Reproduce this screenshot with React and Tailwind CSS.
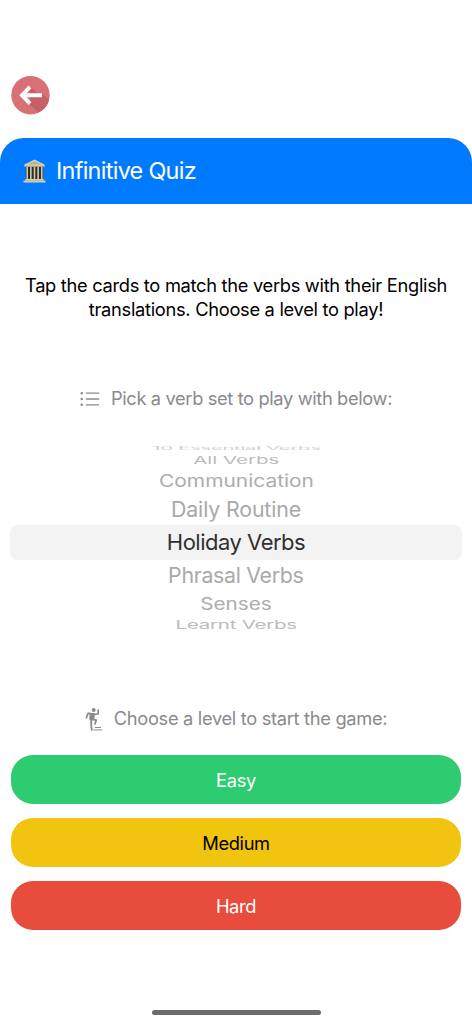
import React, { useState } from "react";

// Each row of the wheel is squashed a bit more the further it is from the middle
const verbSets = [
  { name: "10 Essential Verbs", row: "h-[9px] text-[#d0d0d0]", text: "tracking-[-0.3px] scale-x-[0.92] scale-y-[0.19]" },
  { name: "All Verbs", row: "h-[16px] pb-[1px] text-[#bcbcbc]", text: "scale-x-[0.93] scale-y-[0.5]" },
  { name: "Communication", row: "h-[26px] text-[#acacac]", text: "scale-x-[0.95] scale-y-[0.76]" },
  { name: "Daily Routine", row: "h-[31px] pb-[2px] text-[#a9a9a9]", text: "tracking-[-0.15px] scale-x-[0.97] scale-y-[0.96]" },
  { name: "Holiday Verbs", row: "h-[35px] pb-[2px] text-[#303030]", text: "tracking-[-0.5px]" },
  { name: "Phrasal Verbs", row: "h-[31px] pb-[2px] text-[#a9a9a9]", text: "tracking-[-0.33px] scale-x-[0.97] scale-y-[0.96]" },
  { name: "Senses", row: "h-[26px] text-[#acacac]", text: "scale-x-[0.94] scale-y-[0.76]" },
  { name: "Learnt Verbs", row: "h-[16px] text-[#bcbcbc]", text: "tracking-[-0.25px] scale-x-[0.93] scale-y-[0.53]" },
];

const levels = [
  { name: "Easy", color: "bg-[#2ecc71] text-white" },
  { name: "Medium", color: "bg-[#f1c40f] text-black" },
  { name: "Hard", color: "bg-[#e74c3c] text-white" },
];

const BackIcon = () => (
  <svg width="39" height="39" viewBox="0 0 39 39">
    <circle cx="19.5" cy="19.2" r="19.2" fill="#d87078" />
    <path d="M19 10 27 18H31L38 24A19.2 19.2 0 0 1 27.5 36.6L19 28.5Z" fill="#c75f67" />
    <path d="M19 10.8 11 19.2 19 27.6M11 19.2H31" fill="none" stroke="#fff" strokeWidth="3.9" />
  </svg>
);

const MuseumIcon = () => (
  <svg width="23" height="24" viewBox="0 0 24 24" preserveAspectRatio="none">
    <path d="M3 8H21V21H3Z" fill="#302d22" />
    <path d="M12 .5 22.5 5.5V8H1.5V5.5Z" fill="#d6cfb4" />
    <path d="M12 2.2 19.5 5.6H4.5Z" fill="#b9b192" />
    <path d="M1.5 7.4H22.5" stroke="#8c8569" strokeWidth=".7" />
    <path d="M4.4 8V20.5M8.2 8V20.5M12 8V20.5M15.8 8V20.5M19.6 8V20.5" stroke="#cdc6aa" strokeWidth="1.7" />
    <path d="M2.5 20H21.5V21.5H23.5V23.5H.5V21.5H2.5Z" fill="#d6cfb4" />
    <path d="M1 21.7H23" stroke="#a69e7d" strokeWidth=".5" />
  </svg>
);

const ListIcon = () => (
  <svg width="20" height="16" viewBox="0 0 20 16" fill="none" stroke="#8a8a8e" strokeLinecap="round">
    <path d="M6.3 2.2H18.7M6.3 8H18.7M6.3 13.8H18.7" strokeWidth="1.3" />
    <path d="M1.7 2.2H1.8M1.7 8H1.8M1.7 13.8H1.8" strokeWidth="2.4" />
  </svg>
);

const RunnerIcon = () => (
  <svg width="18" height="24" viewBox="0 0 18 24" fill="none" stroke="#8a8a8e" strokeLinecap="round" strokeLinejoin="round">
    <circle cx="8.7" cy="2.9" r="2" fill="#8a8a8e" stroke="none" />
    <path d="M5.2 6.6H9.2L8.6 12.6H5Z" fill="#8a8a8e" strokeWidth="1.4" />
    <path d="M5 6.4H3L1.4 10.8M9 7.3 13.2 7V3" strokeWidth="1.7" />
    <path d="M7.6 12.4 11.2 13.2 10 16.8M6.2 12.8V17.5L6.7 22.8" strokeWidth="1.8" />
    <path d="M10.3 20.5H15.6M8.7 22.9H16.7" strokeWidth="1" />
  </svg>
);

const App = () => {
  const [selected, setSelected] = useState("Holiday Verbs");

  return (
    <div className="flex h-[1024px] w-[472px] flex-col overflow-hidden bg-white font-['Inter',sans-serif]">
      <div className="h-[138px] pt-[76px] pl-[11px]">
        <button className="block" aria-label="Back">
          <BackIcon />
        </button>
      </div>

      <header className="flex h-[66px] shrink-0 items-center rounded-t-[24px] bg-[#007aff] pl-[23px]">
        <MuseumIcon />
        <h1 className="ml-[10px] text-[23.4px] tracking-[-0.7px] whitespace-nowrap text-white">Infinitive Quiz</h1>
      </header>

      <p className="mt-[69px] text-center text-[18.3px] leading-[24px] tracking-[-0.3px] whitespace-nowrap text-black">
        Tap the cards to match the verbs with their English
        <br />
        translations. Choose a level to play!
      </p>

      <div className="mt-[66px] flex h-[24px] items-center justify-center gap-[11px] text-[18.3px] tracking-[-0.37px] whitespace-nowrap text-[#8a8a8e]">
        <ListIcon />
        <span>Pick a verb set to play with below:</span>
      </div>

      {/* Verb set wheel */}
      <div className="mt-[32px] flex flex-col px-[10px] text-[22px] leading-[26px]">
        {verbSets.map((set) => (
          <button
            key={set.name}
            onClick={() => setSelected(set.name)}
            className={`flex items-center justify-center rounded-[8px] ${set.row} ${set.name === selected ? "bg-[#f3f3f3]" : ""}`}
          >
            <span className={`block whitespace-nowrap ${set.text}`}>{set.name}</span>
          </button>
        ))}
      </div>

      <div className="mt-[74px] flex h-[24px] items-center justify-center gap-[11px] text-[18.3px] tracking-[-0.32px] whitespace-nowrap text-[#8a8a8e]">
        <RunnerIcon />
        <span>Choose a level to start the game:</span>
      </div>

      <div className="mt-[24px] flex flex-col gap-[14px] px-[11px]">
        {levels.map((level) => (
          <button key={level.name} className={`h-[49px] rounded-[22px] pt-[2px] text-[18.3px] tracking-[-0.35px] ${level.color}`}>
            {level.name}
          </button>
        ))}
      </div>

      <div className="mx-auto mt-auto mb-[9px] h-[5px] w-[169px] shrink-0 rounded-full bg-[#6b6b6b]" />
    </div>
  );
};

export default App;
